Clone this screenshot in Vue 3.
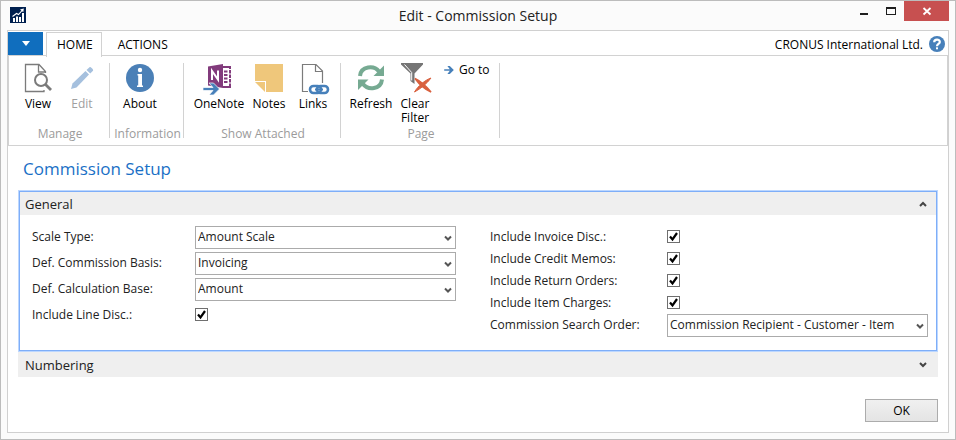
<script setup>
import { reactive, ref } from 'vue'

const open = reactive({ general: true, numbering: false })

const leftFields = reactive([
  { id: 'scale-type', label: 'Scale Type:', kind: 'select', value: 'Amount Scale', options: ['Amount Scale'] },
  { id: 'commission-basis', label: 'Def. Commission Basis:', kind: 'select', value: 'Invoicing', options: ['Invoicing'] },
  { id: 'calculation-base', label: 'Def. Calculation Base:', kind: 'select', value: 'Amount', options: ['Amount'] },
  { id: 'line-disc', label: 'Include Line Disc.:', kind: 'check', value: true }
])

const rightFields = reactive([
  { id: 'invoice-disc', label: 'Include Invoice Disc.:', kind: 'check', value: true },
  { id: 'credit-memos', label: 'Include Credit Memos:', kind: 'check', value: true },
  { id: 'return-orders', label: 'Include Return Orders:', kind: 'check', value: true },
  { id: 'item-charges', label: 'Include Item Charges:', kind: 'check', value: true },
  {
    id: 'search-order',
    label: 'Commission Search Order:',
    kind: 'select',
    value: 'Commission Recipient - Customer - Item',
    options: ['Commission Recipient - Customer - Item']
  }
])

const columns = [
  { name: 'left', fields: leftFields },
  { name: 'right', fields: rightFields }
]

const activeTab = ref('HOME')
</script>

<template>
  <div class="window">
    <header class="titlebar">
      <svg class="app-icon" viewBox="0 0 16 16" aria-hidden="true">
        <rect width="16" height="16" fill="#00204f" />
        <path d="M3 11h2v4H3zM6 9.500h2V15H6zM9 10h2v5H9zM12 6h2v9h-2z" fill="#fff" />
        <path d="M2.500 9.500L6.500 6.500L8.500 7.500L12.500 3" fill="none" stroke="#fff" stroke-width="1.100" />
        <path d="M10 2.500L13.800 1.600L13.300 5.300z" fill="#fff" />
      </svg>
      <h1 class="title">Edit - Commission Setup</h1>
      <div class="window-controls">
        <button class="win-btn" type="button" aria-label="Minimize">
          <svg viewBox="0 0 10 10"><path d="M1 7h8v2H1z" fill="#1e1e1e" /></svg>
        </button>
        <button class="win-btn" type="button" aria-label="Maximize">
          <svg viewBox="0 0 10 10"><path d="M0 1h10v8H0zM1 3v5h8V3z" fill="#1e1e1e" fill-rule="evenodd" /></svg>
        </button>
        <button class="win-btn close" type="button" aria-label="Close">
          <svg viewBox="0 0 10 10"><path d="M1.500 2L8.500 8.500M8.500 2L1.500 8.500" stroke="#fff" stroke-width="1.800" /></svg>
        </button>
      </div>
    </header>

    <main class="client">
      <nav class="tabs">
        <button class="file-tab" type="button" aria-label="Application menu">
          <svg viewBox="0 0 8 5"><path d="M0 0h8L4 5z" fill="#fff" /></svg>
        </button>
        <button class="tab" :class="{ active: activeTab === 'HOME' }" type="button" @click="activeTab = 'HOME'">HOME</button>
        <button class="tab" :class="{ active: activeTab === 'ACTIONS' }" type="button" @click="activeTab = 'ACTIONS'">ACTIONS</button>
        <span class="company">CRONUS International Ltd.</span>
        <button class="help" type="button" aria-label="Help">
          <svg viewBox="0 0 16 16">
            <circle cx="8" cy="8" r="8" fill="#4780ba" />
            <path d="M5.200 6.200C5.200 2.800 10.800 2.800 10.800 6C10.800 8 8 8 8 10.200" fill="none" stroke="#fff" stroke-width="2.200" />
            <rect x="7" y="11.300" width="2" height="2" fill="#fff" />
          </svg>
        </button>
      </nav>

      <section class="ribbon">
        <div class="group manage">
          <div class="actions">
            <button class="action" type="button">
              <svg viewBox="0 0 30 30">
                <path d="M21 27v1.500H2.500V1.500H16L22.500 8.500V10M15.500 2v7H22" fill="none" stroke="#7b7b7b" stroke-width="1.300" />
                <circle cx="18" cy="17" r="6" fill="#fff" stroke="#7b7b7b" stroke-width="2" />
                <path d="M22.300 21.300L28 27" stroke="#7b7b7b" stroke-width="2.800" />
              </svg>
              <span>View</span>
            </button>
            <button class="action" type="button" disabled>
              <svg viewBox="0 0 30 30">
                <path d="M4 26L5.500 20.500L18.500 8L22 11.500L9.500 24.500z" fill="#a5c0de" />
                <path d="M19.500 7L22.500 4.200C23.500 3.400 26.800 6.700 26 7.800L23.200 10.600z" fill="#a5c0de" />
              </svg>
              <span>Edit</span>
            </button>
          </div>
          <div class="caption">Manage</div>
        </div>

        <div class="group information">
          <div class="actions">
            <button class="action" type="button">
              <svg viewBox="0 0 30 30">
                <circle cx="15" cy="15" r="14" fill="#4b80b7" />
                <circle cx="15" cy="7" r="2.200" fill="#fff" />
                <path d="M12.500 11H17v11.500h1V24h-6v-1.500h1.200V12.500h-.7z" fill="#fff" />
              </svg>
              <span>About</span>
            </button>
          </div>
          <div class="caption">Information</div>
        </div>

        <div class="group attached">
          <div class="actions">
            <button class="action wide" type="button">
              <svg viewBox="0 0 30 30">
                <path d="M19 4h7v20h-7" fill="#fff" stroke="#823b7c" stroke-width="2" />
                <path d="M20 8.500h3.500M20 12h3.500M20 15.500h3.500M20 19h3.500" stroke="#823b7c" stroke-width="2" />
                <path d="M25 6.500h3M25 11h3M25 15.500h3M25 20h3" stroke="#fff" stroke-width="1.200" />
                <path d="M4 3.500L19 1V25L4 22.500z" fill="#823b7c" />
                <path d="M8 17V8L14 16.500V7.500" fill="none" stroke="#fff" stroke-width="2" />
                <path d="M-1 24.500h10L5 20h4.500l6 6l-6 6H5l4-4.500h-10z" fill="#4780ba" stroke="#fff" stroke-width=".7" />
              </svg>
              <span>OneNote</span>
            </button>
            <button class="action" type="button">
              <svg viewBox="0 0 30 30">
                <path d="M1 1h28v28H12V18H1z" fill="#efc77b" />
                <path d="M1 19h10v10z" fill="#efc77b" />
              </svg>
              <span>Notes</span>
            </button>
            <button class="action" type="button">
              <svg viewBox="0 0 30 30">
                <path d="M10 28.500H4.500V1.500H18L24.500 8V20M17.500 2v6.500H24" fill="none" stroke="#7b7b7b" stroke-width="1.200" />
                <rect x="12" y="23" width="11" height="7" rx="3.500" fill="none" stroke="#4780ba" stroke-width="2.600" />
                <rect x="19" y="23" width="11" height="7" rx="3.500" fill="none" stroke="#4780ba" stroke-width="2.600" />
                <path d="M17 26.500h8" stroke="#4780ba" stroke-width="2" />
              </svg>
              <span>Links</span>
            </button>
          </div>
          <div class="caption">Show Attached</div>
        </div>

        <div class="group page">
          <div class="actions">
            <button class="action" type="button">
              <svg viewBox="0 0 30 30">
                <path d="M4 13C5 3 18 2 23 8.500" fill="none" stroke="#76aa92" stroke-width="4" />
                <path d="M28 2.500V13H17.500z" fill="#76aa92" />
                <path d="M26 16.500C25 26.500 12 27.500 7 21" fill="none" stroke="#76aa92" stroke-width="4" />
                <path d="M2 27V16.500H12.500z" fill="#76aa92" />
              </svg>
              <span>Refresh</span>
            </button>
            <button class="action" type="button">
              <svg viewBox="0 0 30 30">
                <path d="M1 0h22v1.500L14.500 10.500V21L10.500 18V10.500L1 1.500z" fill="#757575" />
                <path d="M4.500 1.500L11.700 9.500V17.500" fill="none" stroke="#fff" stroke-width="1" />
                <path d="M15 15.500C20 18 26 23 31 29C24 26 19 21 15 15.500z" fill="#d9613f" stroke="#d9613f" stroke-width="1.500" />
                <path d="M31 15C25 17 18 23 14.500 29C21 25.500 27 20.500 31 15z" fill="#d9613f" stroke="#d9613f" stroke-width="1" />
              </svg>
              <span>Clear<br />Filter</span>
            </button>
            <button class="small-action" type="button">
              <svg viewBox="0 0 12 10"><path d="M0 4h7L4 0h3l5 5l-5 5H4l3-4H0z" fill="#4780ba" /></svg>
              <span>Go to</span>
            </button>
          </div>
          <div class="caption">Page</div>
        </div>
      </section>

      <h2 class="page-title">Commission Setup</h2>

      <div class="sections">
        <section class="panel" :class="{ focused: open.general }">
          <button class="panel-head" type="button" :aria-expanded="open.general" @click="open.general = !open.general">
            <span>General</span>
            <svg viewBox="0 0 8 6"><path d="M1 5L4 2L7 5" fill="none" stroke="#444" stroke-width="2" /></svg>
          </button>
          <form v-if="open.general" class="fields" @submit.prevent>
            <div v-for="column in columns" :key="column.name" class="column" :class="column.name">
              <div v-for="field in column.fields" :key="field.id" class="field" :class="field.kind">
                <label :for="field.id">{{ field.label }}</label>
                <div v-if="field.kind === 'select'" class="select-box">
                  <select :id="field.id" v-model="field.value">
                    <option v-for="option in field.options" :key="option">{{ option }}</option>
                  </select>
                  <svg viewBox="0 0 8 7"><path d="M1 1.500L4 4.500L7 1.500" fill="none" stroke="#555" stroke-width="2" /></svg>
                </div>
                <div v-else class="check-box">
                  <input :id="field.id" v-model="field.value" type="checkbox" />
                  <svg v-if="field.value" viewBox="0 0 13 13"><path d="M3 6.500L5.500 9.500L10 3" fill="none" stroke="#000" stroke-width="2.200" /></svg>
                </div>
              </div>
            </div>
          </form>
        </section>

        <section class="panel">
          <button class="panel-head" type="button" :aria-expanded="open.numbering" @click="open.numbering = !open.numbering">
            <span>Numbering</span>
            <svg viewBox="0 0 8 6"><path d="M1 1L4 4L7 1" fill="none" stroke="#444" stroke-width="2" /></svg>
          </button>
        </section>
      </div>

      <footer class="footer">
        <button class="ok" type="button">OK</button>
      </footer>
    </main>
  </div>
</template>

<style>
body {
  margin: 0;
}
</style>

<style scoped>
* {
  box-sizing: border-box;
}

.window {
  display: flex;
  flex-direction: column;
  min-height: 100vh;
  padding: 0 6px 6px;
  border: 1px solid #bcbcbc;
  background: #fbfbfb;
  color: #000;
  font-family: "Open Sans", "Noto Sans", sans-serif;
  font-size: 12px;
  line-height: 16px;
}

button,
select {
  margin: 0;
  padding: 0;
  border: 0;
  background: none;
  color: inherit;
  font: inherit;
}

svg {
  display: block;
  flex: none;
}

.titlebar {
  display: grid;
  grid-template-columns: 1fr auto 1fr;
  align-items: start;
  height: 29px;
}

.app-icon {
  width: 16px;
  height: 16px;
  margin: 6px 0 0 3px;
}

.title {
  margin: 4px 0 0;
  color: #222;
  font-size: 14px;
  font-weight: 400;
  line-height: 21px;
}

.window-controls {
  display: flex;
  justify-content: flex-end;
}

.win-btn {
  display: flex;
  align-items: center;
  justify-content: center;
  width: 27px;
  height: 20px;
}

.win-btn svg {
  width: 10px;
  height: 10px;
}

.win-btn.close {
  width: 45px;
  background: #c75050;
}

.client {
  display: flex;
  flex: 1;
  flex-direction: column;
  border: 1px solid #d0d0d0;
  background: #fff;
}

.tabs {
  display: flex;
  align-items: stretch;
  height: 25px;
  padding: 1px 3px 0 0;
  border-bottom: 1px solid #d2d2d2;
}

.file-tab {
  display: flex;
  align-items: center;
  justify-content: center;
  width: 35px;
  height: 23px;
  margin-right: 3px;
  background: #106ebe;
}

.file-tab svg {
  width: 8px;
  height: 5px;
}

.tab {
  height: 24px;
  padding: 0 8px 0 10px;
  border: 1px solid transparent;
  border-bottom: 0;
}

.tab.active {
  height: 25px;
  border-color: #d2d2d2;
  background: #fff;
}

.tab + .tab {
  padding: 0 15px;
}

.company {
  margin-left: auto;
  line-height: 26px;
}

.help {
  align-self: center;
  margin-left: 6px;
}

.help svg {
  width: 16px;
  height: 16px;
}

.ribbon {
  display: flex;
  height: 90px;
  padding: 7px 0;
  border: 1px solid #d2d2d2;
  border-top: 0;
}

.group {
  display: flex;
  flex-direction: column;
  justify-content: space-between;
  border-right: 1px solid #d2d2d2;
}

.group.manage {
  width: 101px;
}

.group.information {
  width: 74px;
}

.group.attached {
  width: 157px;
}

.group.page {
  width: 159px;
}

.actions {
  display: flex;
  align-items: flex-start;
  padding-left: 8px;
}

.manage .actions,
.attached .actions {
  padding-left: 7px;
}

.action {
  display: flex;
  flex-direction: column;
  align-items: center;
  width: 44px;
  line-height: 14px;
}

.action.wide {
  width: 56px;
}

.action svg {
  width: 30px;
  height: 30px;
  margin-bottom: 4px;
  overflow: visible;
}

.action:disabled {
  color: #a0a0a0;
}

.small-action {
  display: flex;
  align-items: center;
  gap: 4px;
  margin-left: 6px;
  line-height: 14px;
}

.small-action svg {
  width: 12px;
  height: 8px;
}

.caption {
  padding-left: 2px;
  color: #9b9b9b;
  text-align: center;
  line-height: 8px;
}

.page-title {
  margin: 10px 0 8px 15px;
  color: #1a70c6;
  font-size: 17px;
  font-weight: 400;
  line-height: 26px;
}

.sections {
  margin: 0 10px;
}

.panel.focused {
  border: 1px solid #bcd7ff;
  outline: 1px solid #7eaef8;
  outline-offset: -2px;
  padding: 1px;
}

.panel-head {
  display: flex;
  align-items: center;
  justify-content: space-between;
  width: 100%;
  height: 25px;
  padding: 0 11px 0 7px;
  background: #efefef;
  color: #222;
  font-size: 13px;
}

.focused .panel-head {
  height: 23px;
  padding: 0 9px 0 5px;
}

.panel-head svg {
  width: 8px;
  height: 6px;
}

.fields {
  display: flex;
  gap: 34px;
  padding: 11px 8px 13px 12px;
  color: #222;
}

.column {
  display: flex;
  flex-direction: column;
}

.column.left {
  flex: 1 1 424px;
  gap: 3px;
}

.column.right {
  flex: 1 1 438px;
}

.field {
  display: flex;
  min-height: 22px;
  line-height: 22px;
}

.field label {
  flex: none;
  width: 163px;
}

.right .field label {
  width: 177px;
}

.select-box {
  position: relative;
  flex: 1;
  height: 23px;
}

.select-box select {
  display: block;
  width: 100%;
  height: 23px;
  padding: 0 16px 1px 2px;
  border: 1px solid #ababab;
  border-radius: 0;
  appearance: none;
  background: #fff;
  line-height: 20px;
}

.select-box svg {
  position: absolute;
  top: 9px;
  right: 4px;
  width: 8px;
  height: 7px;
  pointer-events: none;
}

.check-box {
  position: relative;
  width: 13px;
  height: 13px;
  margin-top: 4px;
}

.check-box input {
  display: block;
  width: 13px;
  height: 13px;
  margin: 0;
  border: 1px solid #6f6f6f;
  appearance: none;
  background: #fff;
}

.check-box svg {
  position: absolute;
  inset: 0;
  width: 13px;
  height: 13px;
  pointer-events: none;
}

.footer {
  display: flex;
  justify-content: flex-end;
  margin-top: auto;
  padding: 0 10px 10px;
}

.ok {
  width: 73px;
  height: 23px;
  border: 1px solid #acacac;
  background: linear-gradient(#f0f0f0, #e4e4e4);
}
</style>
